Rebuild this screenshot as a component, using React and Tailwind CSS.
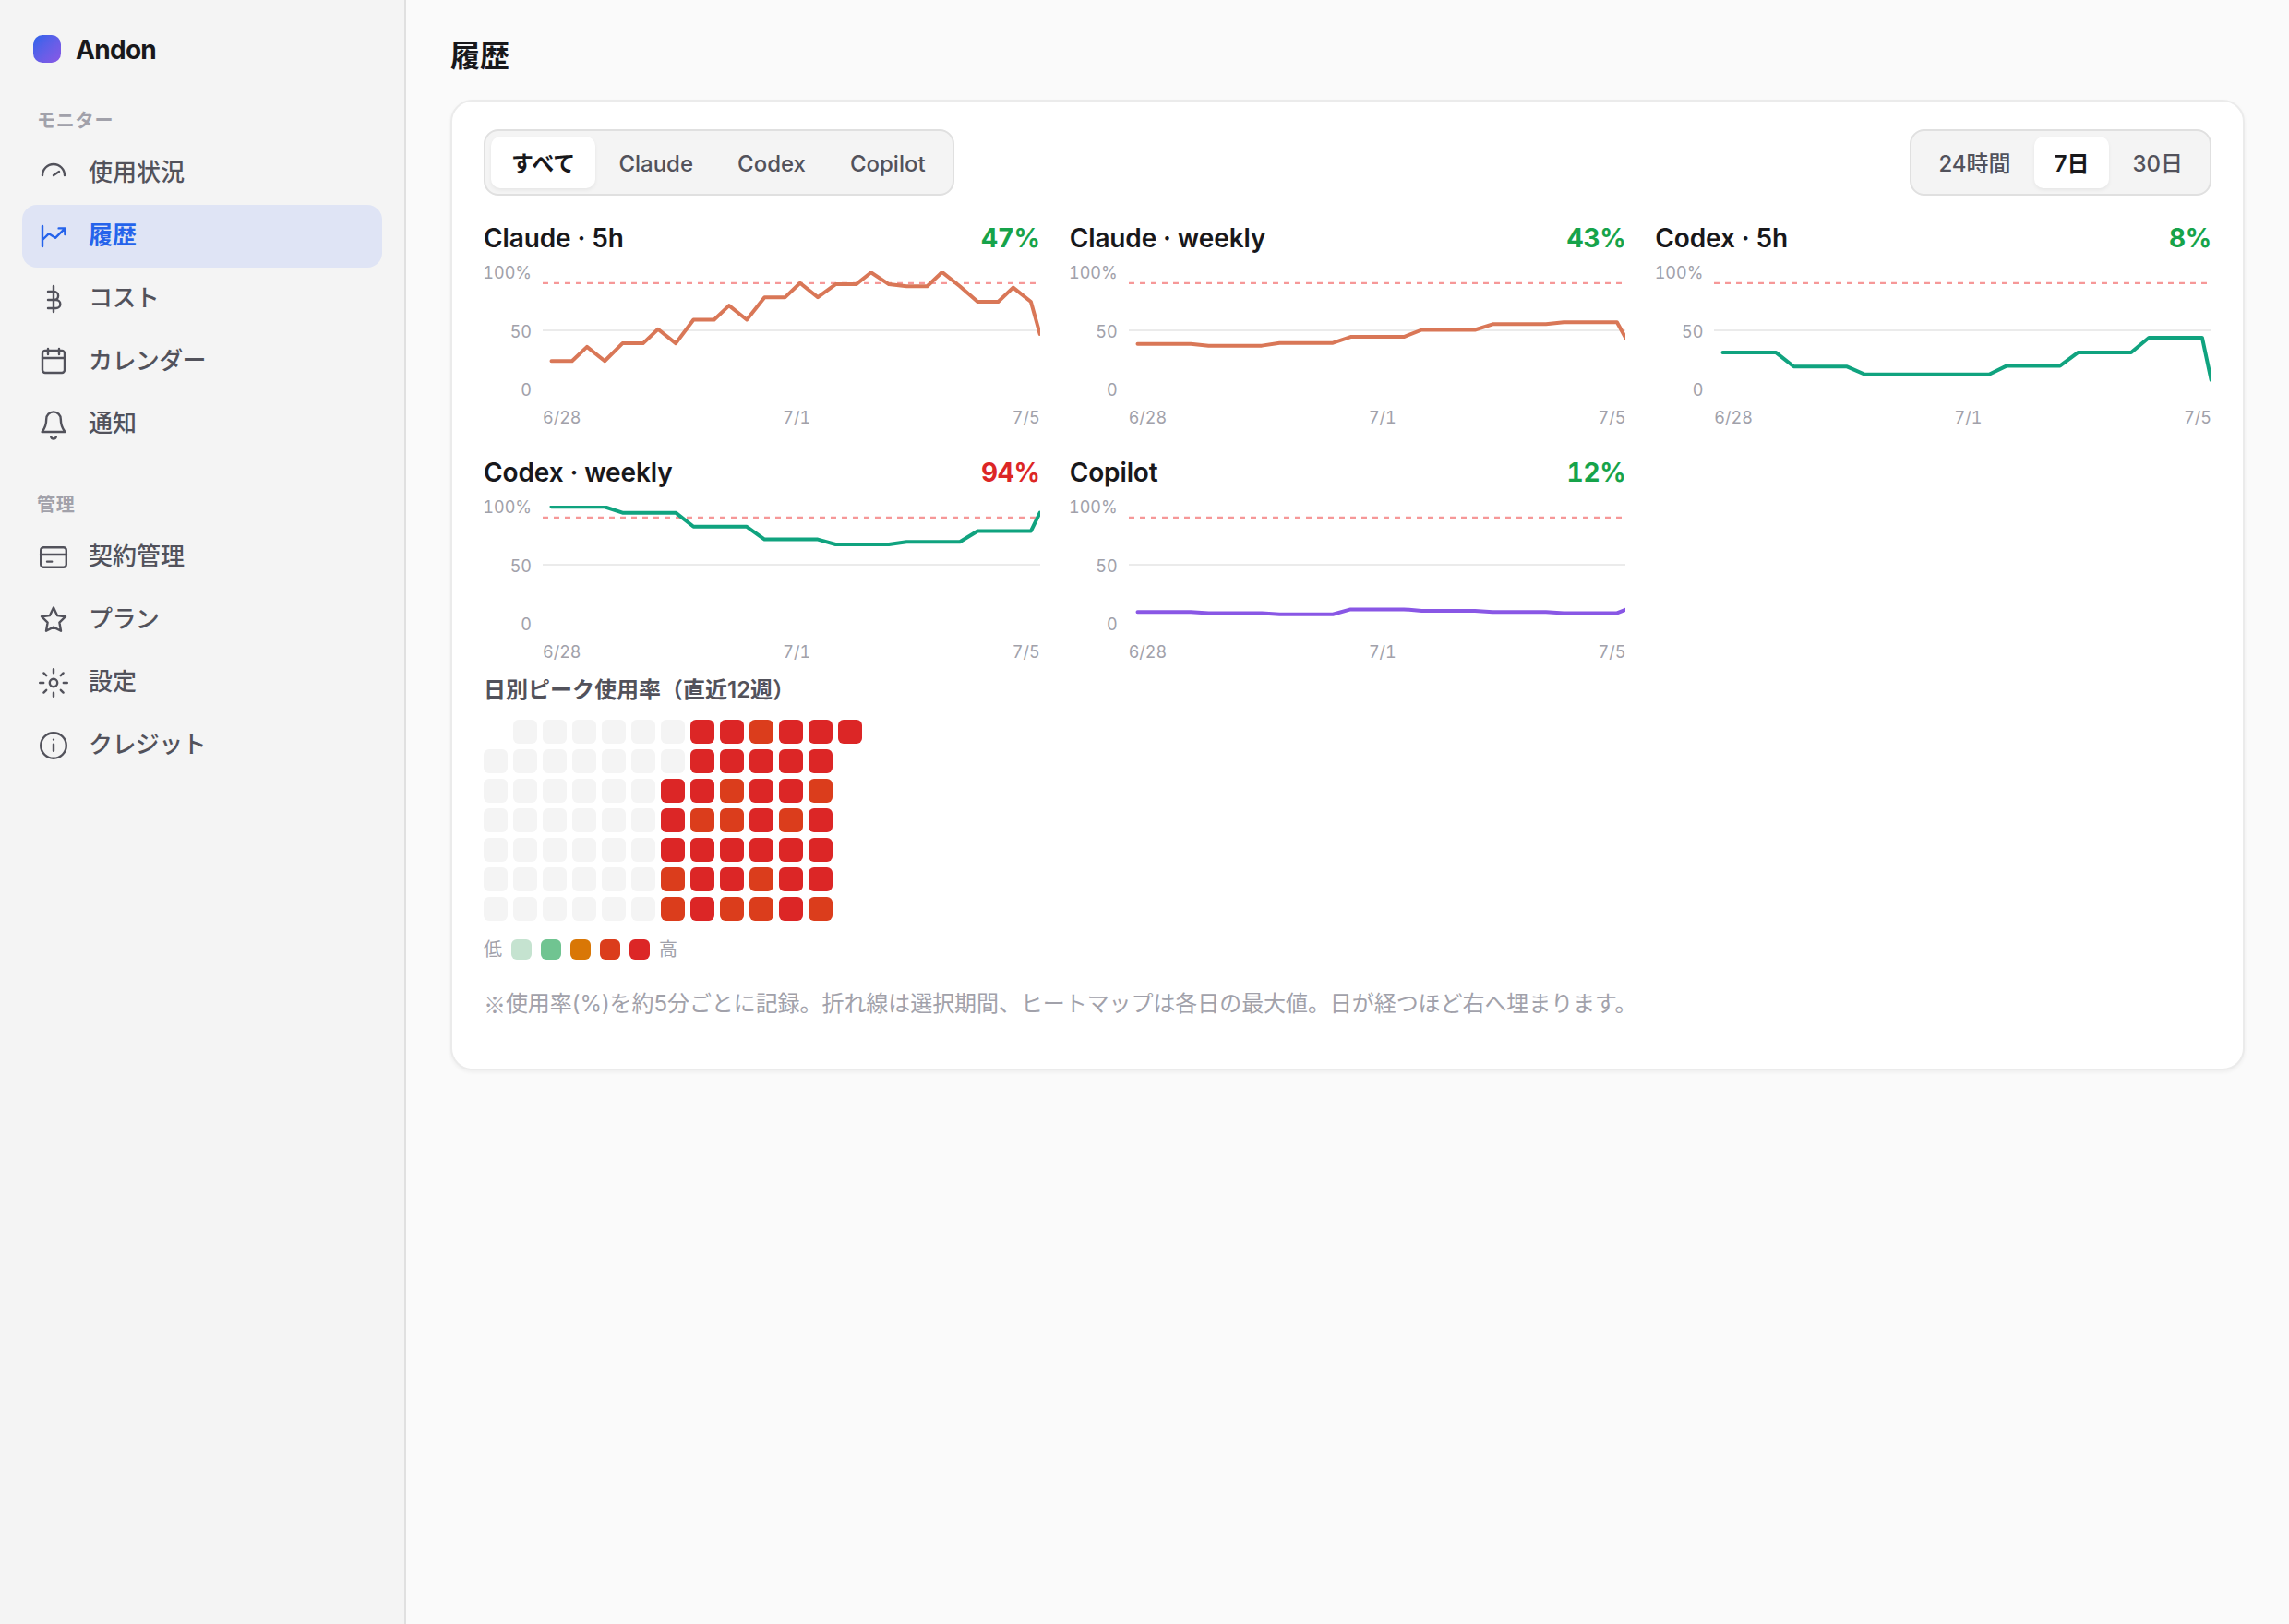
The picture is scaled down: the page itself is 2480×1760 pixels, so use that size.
import React, { useState } from 'react';
import clsx from 'clsx';

const DAY = 76.95;
const START = 9.5;

// One value a day: flat for 18 hours, then a step to the next day.
const daily = (values, now) => [
    ...values.flatMap((v, i) => [
        [START + i * DAY, v],
        [START + i * DAY + DAY * 0.75, v],
    ]),
    [538.67, now],
];

// Same as daily, with a spike at noon.
const spiky = (values, now) => [
    ...values.flatMap((v, i) => [
        [START + i * DAY, v],
        [START + i * DAY + DAY * 0.29, v],
        [START + i * DAY + DAY * 0.5, v === 89 ? 99 : v + 12],
        [START + i * DAY + DAY * 0.75, v],
    ]),
    [538.67, now],
];

const charts = [
    { name: 'Claude · 5h', value: 47, color: '#d97757', points: spiky([24, 39, 59, 78, 89, 87.3, 74.2], 47) },
    { name: 'Claude · weekly', value: 43, color: '#d97757', points: daily([38.5, 37, 39.3, 44.5, 50.4, 55.2, 56.8], 43) },
    { name: 'Codex · 5h', value: 8, color: '#10a37f', points: daily([31.2, 19.3, 12.7, 12.7, 20, 31.2, 43.8], 8) },
    { name: 'Codex · weekly', value: 94, color: '#10a37f', points: daily([99, 94, 82.2, 71.4, 67.2, 69.3, 78.5], 94) },
    { name: 'Copilot', value: 12, color: '#8957e5', points: daily([9.9, 9, 8, 12.2, 11, 9.9, 9], 12) },
];

// '.' no cell, 0 no data, 4 high, 5 highest
const heatmap = [
    '.000000554555',
    '000000055555.',
    '000000554554.',
    '000000544545.',
    '000000555555.',
    '000000455455.',
    '000000454454.',
];

const cellColors = {
    '.': 'bg-transparent',
    0: 'bg-[#f4f4f4]',
    4: 'bg-[#db3d1c]',
    5: 'bg-[#dc2626]',
};

const legend = ['bg-[#c5e3d0]', 'bg-[#70c491]', 'bg-[#d97706]', 'bg-[#db3d1c]', 'bg-[#dc2626]'];

const icons = {
    gauge: <path d="M2 9a6 6 0 0 1 12 0M8 9l3-2" />,
    history: <path d="M2 2.5v11M2 10l3.5-3.4L9 8.9l5-5M10.8 3.7H14.2V7" />,
    cost: <path d="M8 1v14M5 4h3.3a2.25 2.25 0 0 1 0 4.5H5h4.4a2.25 2.25 0 0 1 0 4.5H5" />,
    calendar: (
        <>
            <rect x="2" y="2" width="12" height="12" rx="1.5" />
            <path d="M2 6h12M5 1v3M11 1v3" />
        </>
    ),
    bell: <path d="M8 1.2A3.9 3.9 0 0 0 4.1 5.1C4.1 9 1.8 12 1.8 12h12.4s-2.3-3-2.3-6.9A3.9 3.9 0 0 0 8 1.2zM6.6 14.7a1.45 1.45 0 0 0 2.8 0" />,
    card: (
        <>
            <rect x="1.1" y="2.6" width="13.8" height="10.8" rx="1.5" />
            <path d="M1 6.5h14M4.5 10.3h2.6" />
        </>
    ),
    star: <path d="M8 1.3l2 4.2 4.5.6-3.3 3.2.8 4.6L8 11.8l-4 2.1.8-4.6L1.5 6.1 6 5.5z" />,
    sun: (
        <>
            <circle cx="8" cy="8" r="2.1" />
            <path d="M8 .6v2M8 13.4v2M.6 8h2M13.4 8h2M2.7 2.7l1.4 1.4M11.9 11.9l1.4 1.4M2.7 13.3l1.4-1.4M11.9 4.1l1.4-1.4" />
        </>
    ),
    info: (
        <>
            <circle cx="8" cy="8" r="6.9" />
            <path d="M8 7.3v3.6M8 4.8v.01" />
        </>
    ),
};

const sections = [
    {
        title: 'モニター',
        items: [
            { label: '使用状況', icon: 'gauge' },
            { label: '履歴', icon: 'history' },
            { label: 'コスト', icon: 'cost', kana: true },
            { label: 'カレンダー', icon: 'calendar', kana: true },
            { label: '通知', icon: 'bell' },
        ],
    },
    {
        title: '管理',
        items: [
            { label: '契約管理', icon: 'card' },
            { label: 'プラン', icon: 'star', kana: true },
            { label: '設定', icon: 'sun' },
            { label: 'クレジット', icon: 'info', kana: true },
        ],
    },
];

function Icon({ name }) {
    return (
        <svg
            className="w-8 h-8 shrink-0 overflow-visible"
            viewBox="0 0 16 16"
            fill="none"
            stroke="currentColor"
            strokeWidth="1.2"
            strokeLinecap="round"
            strokeLinejoin="round"
        >
            {icons[name]}
        </svg>
    );
}

function Sidebar({ page, onSelect }) {
    return (
        <aside className="w-[440px] shrink-0 px-6 pt-[38px] bg-[#f4f4f4] border-r-2 border-[#e0e0e0]">
            <div className="flex items-center h-[30px] pl-3 gap-4">
                <div className="w-[30px] h-[30px] rounded-[10px] bg-linear-135 from-[#2563eb] to-[#8957e5]" />
                <span className="pt-0.5 text-[28px] leading-none font-bold tracking-[-0.7px] text-[#18181b]">Andon</span>
            </div>
            {sections.map((section, i) => (
                <div key={section.title} className={i === 0 ? 'mt-[49px]' : 'mt-[39px]'}>
                    <div className="h-7 pl-4 mb-[9px] flex items-center text-[20px] leading-none font-bold tracking-[0.8px] text-[#a1a1aa]">
                        {section.title}
                    </div>
                    {section.items.map(item => (
                        <div
                            key={item.label}
                            onClick={() => onSelect(item.label)}
                            className={clsx(
                                'flex items-center h-[68px] pl-[18px] gap-[22px] rounded-[16px] cursor-pointer text-[26px] leading-none',
                                page === item.label ? 'bg-[#dfe4f5] text-[#2563eb] font-bold' : 'text-[#52525b] font-medium',
                                item.kana && 'tracking-[-0.6px]'
                            )}
                        >
                            <Icon name={item.icon} />
                            <span className="pb-0.5">{item.label}</span>
                        </div>
                    ))}
                </div>
            ))}
        </aside>
    );
}

function Segmented({ options, value, onChange }) {
    return (
        <div className="flex gap-0.5 h-[72px] p-1.5 rounded-[16px] border-2 border-[#e0e0e0] bg-[#f4f4f4]">
            {options.map(option => (
                <button
                    key={option}
                    onClick={() => onChange(option)}
                    className={clsx(
                        'h-14 pt-[3px] rounded-[10px] text-[24px] leading-none whitespace-nowrap cursor-pointer',
                        value === option ? 'px-[22px] bg-white text-[#18181b] font-semibold shadow-[0_2px_4px_rgba(0,0,0,0.06)]' : 'px-[23px] text-[#52525b] font-medium'
                    )}
                >
                    {option}
                </button>
            ))}
        </div>
    );
}

function Chart({ name, value, color, points }) {
    const line = points.map(([x, v]) => `${x},${128 - v * 1.28}`).join(' ');

    return (
        <div className="h-[226px] min-w-0">
            <div className="flex items-center justify-between h-9 text-[28px] leading-none">
                <span className="font-semibold tracking-[-0.12px] text-[#18181b]">{name}</span>
                <span className={clsx('font-bold tabular-nums tracking-[-0.3px]', value >= 90 ? 'text-[#dc2626]' : 'text-[#16a34a]')}>{value}%</span>
            </div>
            <div className="flex gap-3 mt-2.5">
                <div className="w-[52px] h-[147px] flex flex-col justify-between items-end text-[18px] leading-5 tabular-nums text-[#a1a1aa]">
                    <span>100%</span>
                    <span>50</span>
                    <span>0</span>
                </div>
                <svg className="flex-1 min-w-0 h-32 mt-2 overflow-hidden" viewBox="0 0 538.67 128" preserveAspectRatio="none" fill="none">
                    <path d="M0 64h539" stroke="#ebebeb" strokeWidth="2" />
                    <path d="M0 12.8h539" stroke="#ef4444" strokeOpacity="0.55" strokeWidth="2.2" strokeDasharray="6 6" />
                    <polyline points={line} stroke={color} strokeWidth="4" strokeLinecap="round" strokeLinejoin="round" />
                </svg>
            </div>
            <div className="flex items-center justify-between h-6 mt-[7px] pt-px pl-16 text-[18px] leading-none tabular-nums text-[#a1a1aa]">
                <span>6/28</span>
                <span>7/1</span>
                <span>7/5</span>
            </div>
        </div>
    );
}

function Heatmap() {
    return (
        <div>
            <div className="flex flex-col gap-1.5">
                {heatmap.map((row, r) => (
                    <div key={r} className="flex gap-1.5">
                        {row.split('').map((cell, c) => (
                            <div key={c} className={clsx('w-[26px] h-[26px] rounded-[6px]', cellColors[cell])} />
                        ))}
                    </div>
                ))}
            </div>
            <div className="flex items-center gap-2.5 h-[22px] mt-5 text-[20px] leading-none text-[#a1a1aa]">
                <span>低</span>
                {legend.map(color => (
                    <div key={color} className={clsx('w-[22px] h-[22px] rounded-[6px]', color)} />
                ))}
                <span>高</span>
            </div>
        </div>
    );
}

function App() {
    const [page, setPage] = useState('履歴');
    const [service, setService] = useState('すべて');
    const [range, setRange] = useState('7日');

    return (
        <div lang="ja" className="flex min-h-screen bg-[#fafafa] font-[Inter,'Noto_Sans_CJK_JP',sans-serif]">
            <Sidebar page={page} onSelect={setPage} />
            <main className="flex-1 min-w-0 px-12 pt-10">
                <h1 className="h-10 pt-0.5 flex items-center text-[32px] leading-none font-bold text-[#18181b]">履歴</h1>
                <section className="mt-7 h-[1052px] px-[34px] pt-[30px] rounded-[24px] border-2 border-[#ebebeb] bg-white shadow-[0_2px_4px_rgba(0,0,0,0.05)]">
                    <div className="flex justify-between">
                        <Segmented options={['すべて', 'Claude', 'Codex', 'Copilot']} value={service} onChange={setService} />
                        <Segmented options={['24時間', '7日', '30日']} value={range} onChange={setRange} />
                    </div>
                    <div className="grid grid-cols-3 gap-x-8 gap-y-7 mt-7">
                        {charts.map(chart => (
                            <Chart key={chart.name} {...chart} />
                        ))}
                    </div>
                    <h2 className="h-8 mt-3 mb-4 flex items-center text-[24px] leading-none font-semibold text-[#52525b]">
                        日別ピーク使用率（直近12週）
                    </h2>
                    <Heatmap />
                    <p className="h-8 mt-8 flex items-center text-[24px] leading-none tracking-[-0.07px] text-[#a1a1aa]">
                        <span className="font-['Noto_Sans_CJK_JP',sans-serif]">※</span>
                        使用率(%)を約5分ごとに記録。折れ線は選択期間、ヒートマップは各日の最大値。日が経つほど右へ埋まります。
                    </p>
                </section>
            </main>
        </div>
    );
}

export default App;
